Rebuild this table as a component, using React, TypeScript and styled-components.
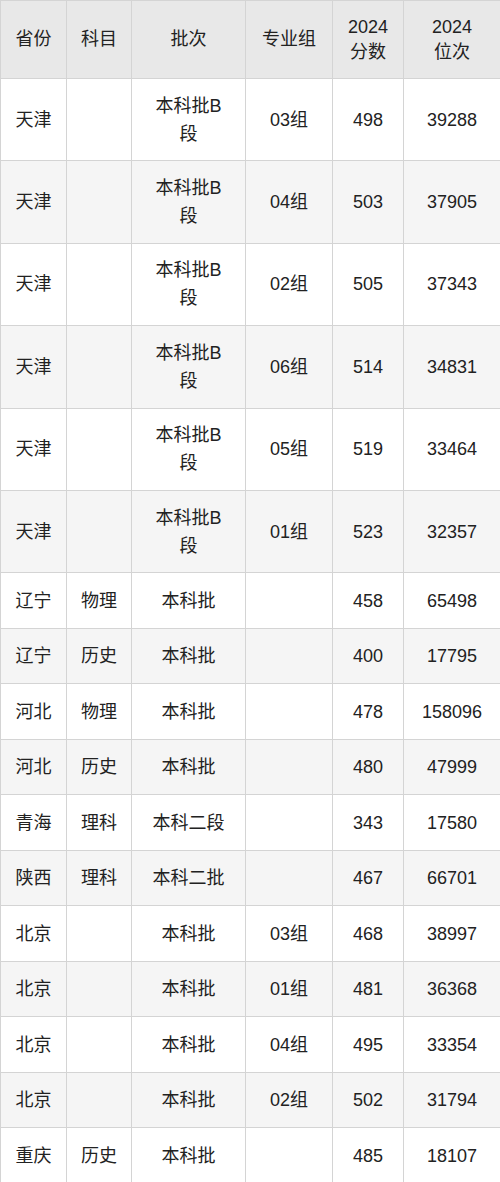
import React from "react";
import styled, { createGlobalStyle } from "styled-components";

const GlobalStyle = createGlobalStyle`
  html, body {
    margin: 0;
    padding: 0;
    background: #ffffff;
  }
`;

const Table = styled.table`
  width: 500px;
  border-collapse: collapse;
  table-layout: fixed;
  font-family: "Liberation Sans", "Noto Sans CJK SC", sans-serif;
  font-size: 18px;
  color: #222222;
`;

const HeadRow = styled.tr`
  height: 78px;
  background: #e8e8e8;
`;

const HeadCell = styled.th`
  font-weight: normal;
  line-height: 25px;
  border: 1px solid #d4d4d4;
  padding: 0 4px;
  text-align: center;
`;

const Row = styled.tr<{ $tall?: boolean; $shaded?: boolean }>`
  height: ${(p) => (p.$tall ? "82.4px" : "55.5px")};
  background: ${(p) => (p.$shaded ? "#f5f5f5" : "#ffffff")};
`;

const Cell = styled.td<{ $wide?: boolean }>`
  border: 1px solid #d4d4d4;
  padding: ${(p) => (p.$wide ? "0 18px" : "0 4px")};
  line-height: 28px;
  text-align: center;
  vertical-align: middle;
`;

const cols = [66, 65, 114, 87, 71, 97];

type Entry = [string, string, string, string, string, string];

const rows: Entry[] = [
  ["天津", "", "本科批B段", "03组", "498", "39288"],
  ["天津", "", "本科批B段", "04组", "503", "37905"],
  ["天津", "", "本科批B段", "02组", "505", "37343"],
  ["天津", "", "本科批B段", "06组", "514", "34831"],
  ["天津", "", "本科批B段", "05组", "519", "33464"],
  ["天津", "", "本科批B段", "01组", "523", "32357"],
  ["辽宁", "物理", "本科批", "", "458", "65498"],
  ["辽宁", "历史", "本科批", "", "400", "17795"],
  ["河北", "物理", "本科批", "", "478", "158096"],
  ["河北", "历史", "本科批", "", "480", "47999"],
  ["青海", "理科", "本科二段", "", "343", "17580"],
  ["陕西", "理科", "本科二批", "", "467", "66701"],
  ["北京", "", "本科批", "03组", "468", "38997"],
  ["北京", "", "本科批", "01组", "481", "36368"],
  ["北京", "", "本科批", "04组", "495", "33354"],
  ["北京", "", "本科批", "02组", "502", "31794"],
  ["重庆", "历史", "本科批", "", "485", "18107"],
];

const App = () => {
  return (
    <>
      <GlobalStyle />
      <Table>
        <colgroup>
          {cols.map((w, i) => (
            <col key={i} style={{ width: w }} />
          ))}
        </colgroup>
        <thead>
          <HeadRow>
            <HeadCell>省份</HeadCell>
            <HeadCell>科目</HeadCell>
            <HeadCell>批次</HeadCell>
            <HeadCell>专业组</HeadCell>
            <HeadCell>2024<br />分数</HeadCell>
            <HeadCell>2024<br />位次</HeadCell>
          </HeadRow>
        </thead>
        <tbody>
          {rows.map((r, i) => (
            <Row key={i} $tall={r[2].includes("B")} $shaded={i % 2 === 1}>
              {r.map((c, j) => (
                <Cell key={j} $wide={j === 2}>{c}</Cell>
              ))}
            </Row>
          ))}
        </tbody>
      </Table>
    </>
  );
};

export default App;
